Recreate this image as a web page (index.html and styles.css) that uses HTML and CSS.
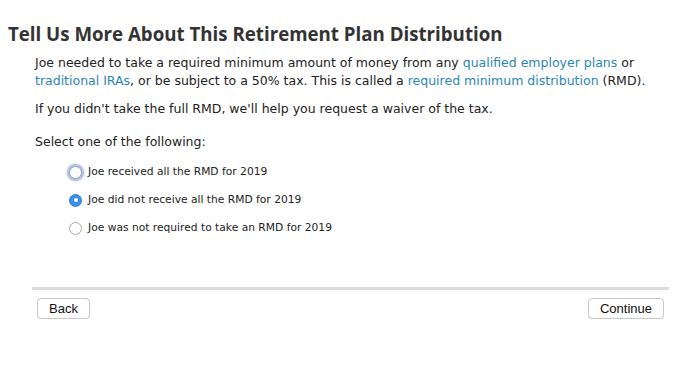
FILE: index.html
```html
<!DOCTYPE html>
<html>
<head>
<meta charset="utf-8">
<link rel="stylesheet" href="styles.css">
</head>
<body>
<div class="page">
  <h1 class="title">Tell Us More About This Retirement Plan Distribution</h1>
  <div class="content">
    <p class="para">Joe needed to take a required minimum amount of money from any <a class="link">qualified employer plans</a> or <a class="link">traditional IRAs</a>, or be subject to a 50% tax. This is called a <a class="link">required minimum distribution</a> (RMD).</p>
    <p class="para gap1">If you didn't take the full RMD, we'll help you request a waiver of the tax.</p>
    <p class="para gap2">Select one of the following:</p>
    <div class="options">
      <label class="option"><span class="radio focus"></span><span>Joe received all the RMD for 2019</span></label>
      <label class="option"><span class="radio checked"></span><span>Joe did not receive all the RMD for 2019</span></label>
      <label class="option"><span class="radio"></span><span>Joe was not required to take an RMD for 2019</span></label>
    </div>
  </div>
  <div class="footer">
    <div class="rule"></div>
    <div class="buttons">
      <button class="btn">Back</button>
      <button class="btn">Continue</button>
    </div>
  </div>
</div>
</body>
</html>
```
FILE: styles.css
```css
html, body { margin: 0; padding: 0; background: #fff; }
body { font-family: "DejaVu Sans", "Open Sans", sans-serif; color: #222; }
.page { padding: 21px 0 0 8px; width: 681px; box-sizing: border-box; }
.title { margin: 0; font-family: "Open Sans", sans-serif; font-size: 18.7px; font-weight: 700; color: #333; line-height: 26px; }
.content { padding-left: 27px; padding-top: 7px; width: 646px; box-sizing: border-box; }
.para { margin: 0; font-size: 12.5px; line-height: 18px; color: #222; }
.gap1 { margin-top: 10px; }
.gap2 { margin-top: 15px; }
.link { color: #2a86b8; text-decoration: none; }
.options { display: flex; flex-direction: column; gap: 12px; padding: 13px 0 0 34px; }
.option { display: flex; align-items: center; gap: 6px; font-size: 10.7px; line-height: 16px; color: #222; }
.radio { width: 13px; height: 13px; border-radius: 50%; border: 1px solid #aaa; box-sizing: border-box; background: #fff; flex: none; }
.radio.focus { box-shadow: 0 0 0 2px #b3c4dc, 0 0 2px 3px rgba(150,175,210,0.35); border-color: #8fa6c8; }
.radio.checked { background: #3a8ef0; border-color: #2f7fe0; display: flex; align-items: center; justify-content: center; }
.radio.checked::after { content: ""; width: 4px; height: 4px; border-radius: 50%; background: #fff; }
.footer { margin: 51px 12px 0 24px; }
.rule { height: 3px; background: #dcdcdc; }
.buttons { display: flex; justify-content: space-between; padding: 8px 5px 0 5px; }
.btn { font-family: "Liberation Sans", Arial, sans-serif; font-size: 13px; color: #111; background: #fff; border: 1px solid #c8c8c8; border-radius: 4px; height: 21px; padding: 0 11px; box-shadow: 0 1px 1px rgba(0,0,0,0.08); }
```
